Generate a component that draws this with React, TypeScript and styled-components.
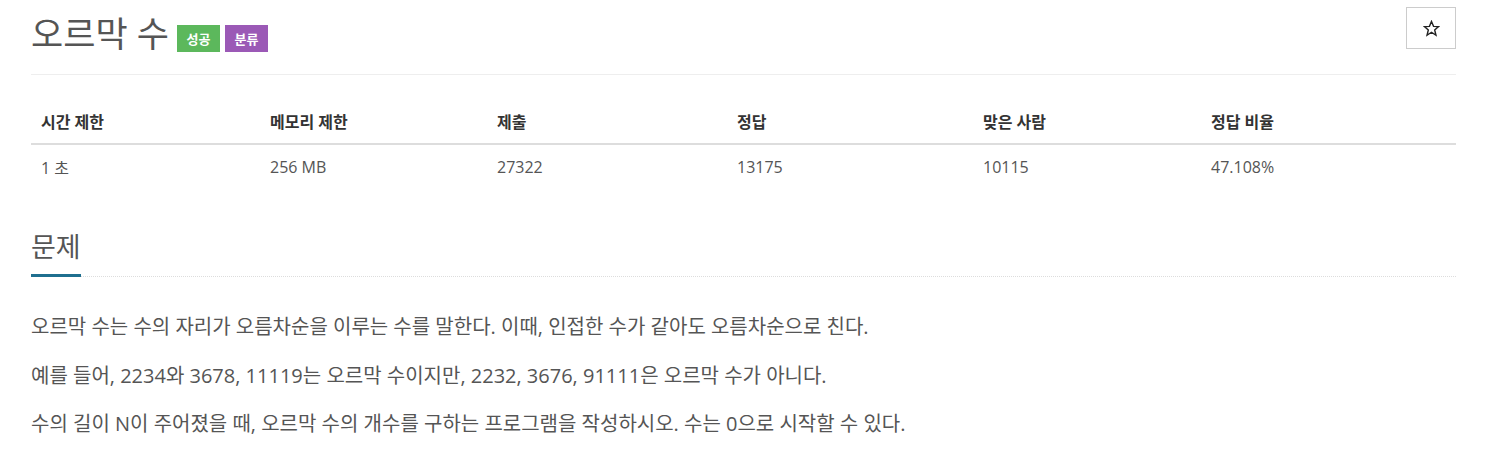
import React from "react";
import styled, { createGlobalStyle } from "styled-components";

const Global = createGlobalStyle`
  body {
    margin: 0;
    background: #fff;
    font-family: "Open Sans", "Noto Sans CJK KR", sans-serif;
    color: #333;
  }
`;

const Page = styled.div`
  padding: 0 30px 0 31px;
`;

const Header = styled.div`
  display: flex;
  align-items: flex-start;
  justify-content: space-between;
  border-bottom: 1px solid #eee;
  padding-bottom: 12px;
`;

const Title = styled.h1`
  margin: 6px 0 0;
  display: flex;
  align-items: center;
  gap: 5px;
  font-size: 35px;
  font-weight: 400;
  color: #555;
  line-height: 56px;
`;

const TitleText = styled.span`
  margin-right: 3px;
`;

const Label = styled.span<{ $bg: string }>`
  display: inline-flex;
  align-items: center;
  justify-content: center;
  height: 27px;
  width: 43px;
  box-sizing: border-box;
  background: ${(p) => p.$bg};
  color: #fff;
  font-size: 13px;
  font-weight: 700;
  margin-top: 9px;
`;

const StarButton = styled.button`
  margin-top: 7px;
  width: 50px;
  height: 42px;
  border: 1px solid #ccc;
  background: #fff;
  display: flex;
  align-items: center;
  justify-content: center;
  padding: 0;
  color: #333;
`;

const Table = styled.table`
  width: 100%;
  border-collapse: collapse;
  margin-top: 25px;
  font-size: 16px;
`;

const Th = styled.th`
  text-align: left;
  font-weight: 700;
  padding: 9px 10px 10px;
  border-bottom: 2px solid #ddd;
  color: #333;
`;

const Td = styled.td`
  padding: 10px 10px;
  color: #555;
`;

const Section = styled.section`
  margin-top: 40px;
`;

const SectionHead = styled.div`
  border-bottom: 1px dotted #ddd;
`;

const SectionTitle = styled.h2`
  display: inline-block;
  margin: 0;
  font-size: 27px;
  font-weight: 400;
  color: #555;
  padding-bottom: 9px;
  margin-bottom: -1px;
  border-bottom: 3px solid #1f6f8f;
  line-height: 36px;
`;

const Text = styled.p`
  font-size: 20px;
  color: #555;
  margin: 0 0 19.5px;
  line-height: 29px;
`;

const Body = styled.div`
  margin-top: 35px;
`;

const Star = () => (
  <svg width="17" height="17" viewBox="0 0 24 24" fill="none" stroke="#222" strokeWidth="2" strokeLinejoin="miter">
    <polygon points="12,2 14.9,9 22,9.3 16.5,14 18.3,21.5 12,17.3 5.7,21.5 7.5,14 2,9.3 9.1,9" />
  </svg>
);

const headers = ["시간 제한", "메모리 제한", "제출", "정답", "맞은 사람", "정답 비율"];
const values = ["1 초", "256 MB", "27322", "13175", "10115", "47.108%"];
const widths = [229, 227, 240, 246, 228, 255];

export default function App() {
  return (
    <Page>
      <Global />
      <Header>
        <Title>
          <TitleText>오르막 수</TitleText>
          <Label $bg="#5cb85c">성공</Label>
          <Label $bg="#9b59b6">분류</Label>
        </Title>
        <StarButton aria-label="star">
          <Star />
        </StarButton>
      </Header>
      <Table>
        <colgroup>
          {widths.map((w, i) => (
            <col key={i} style={{ width: w }} />
          ))}
        </colgroup>
        <thead>
          <tr>
            {headers.map((h) => (
              <Th key={h}>{h}</Th>
            ))}
          </tr>
        </thead>
        <tbody>
          <tr>
            {values.map((v) => (
              <Td key={v}>{v}</Td>
            ))}
          </tr>
        </tbody>
      </Table>
      <Section>
        <SectionHead>
          <SectionTitle>문제</SectionTitle>
        </SectionHead>
        <Body>
          <Text>오르막 수는 수의 자리가 오름차순을 이루는 수를 말한다. 이때, 인접한 수가 같아도 오름차순으로 친다.</Text>
          <Text>예를 들어, 2234와 3678, 11119는 오르막 수이지만, 2232, 3676, 91111은 오르막 수가 아니다.</Text>
          <Text>수의 길이 N이 주어졌을 때, 오르막 수의 개수를 구하는 프로그램을 작성하시오. 수는 0으로 시작할 수 있다.</Text>
        </Body>
      </Section>
    </Page>
  );
}
